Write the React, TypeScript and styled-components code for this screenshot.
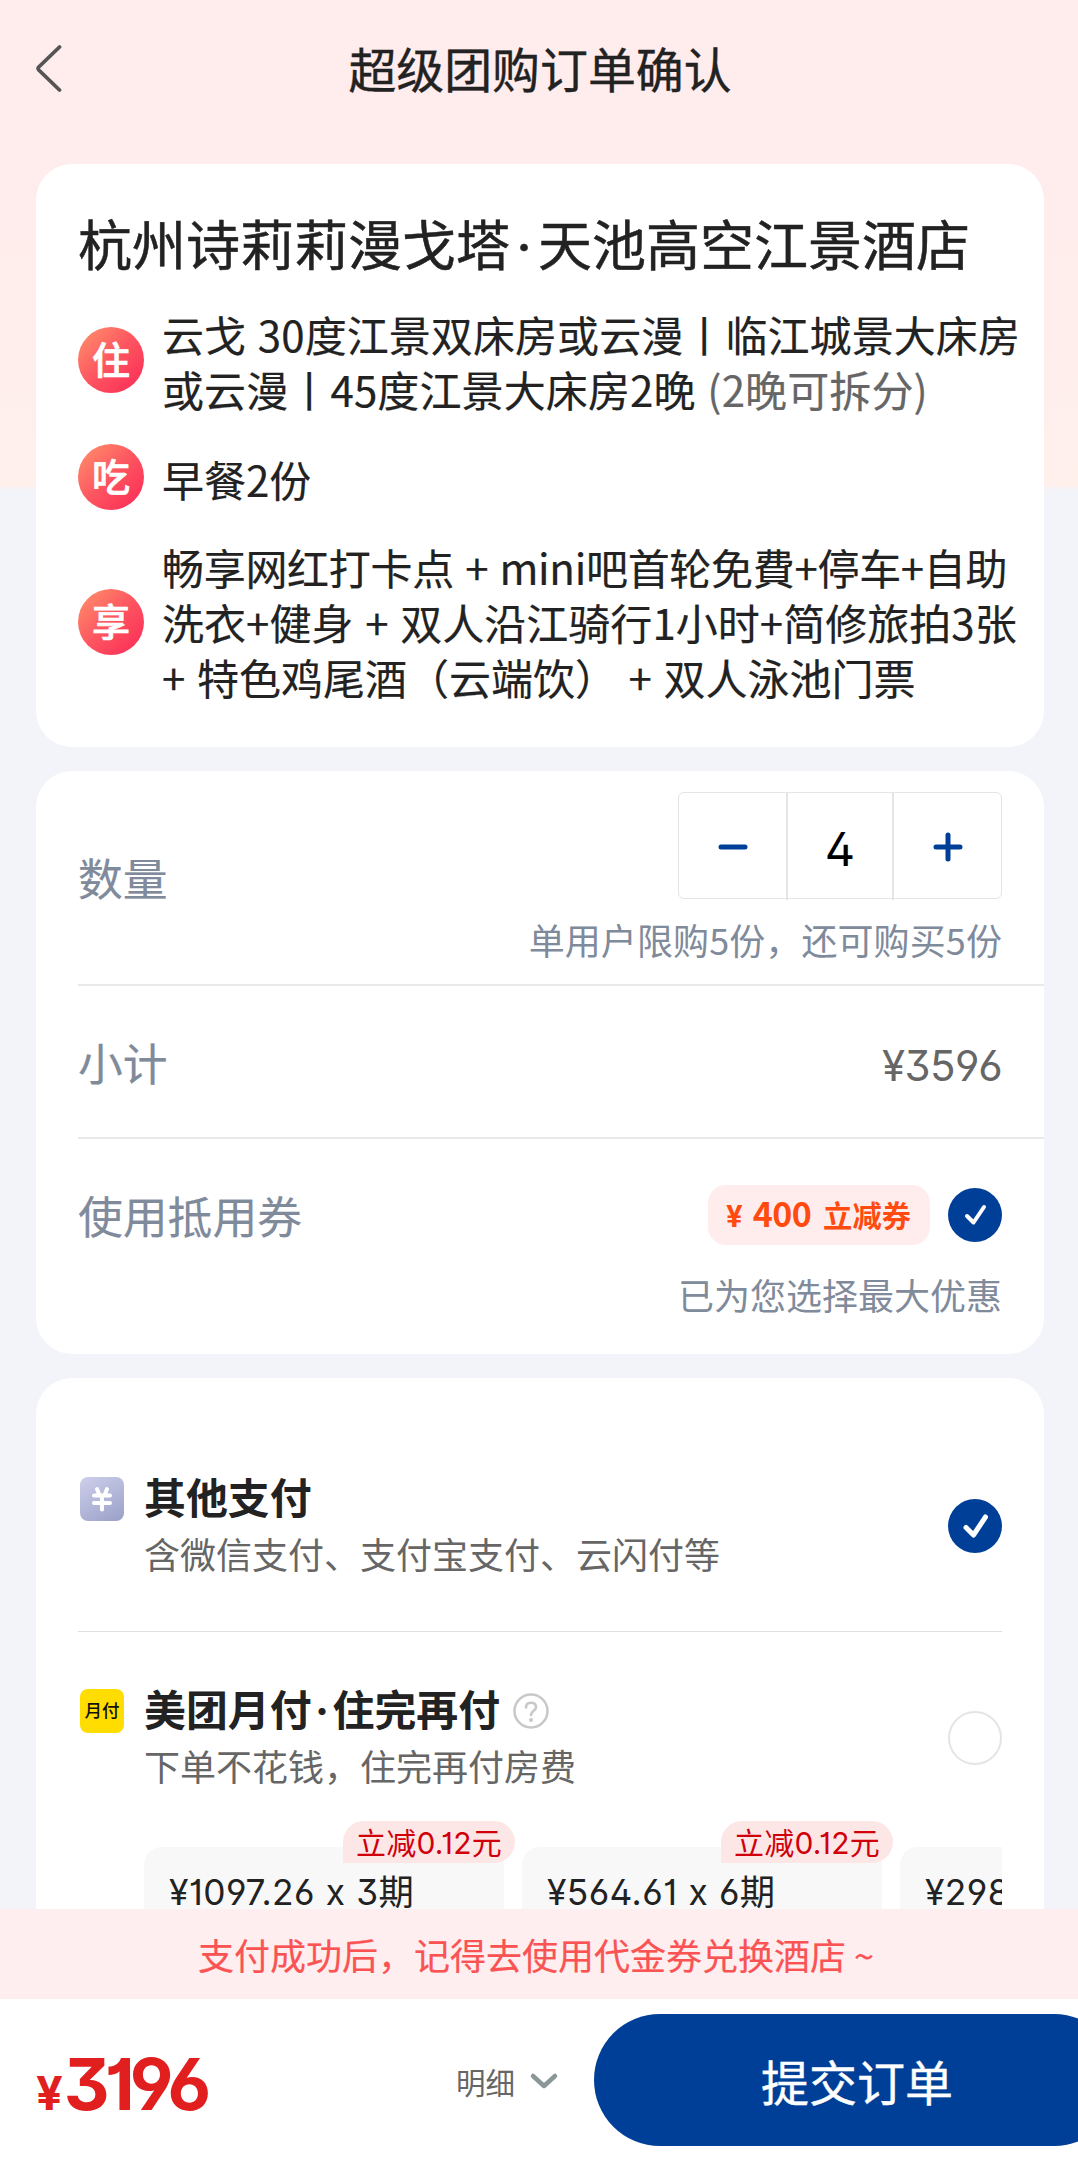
import React from "react";
import styled, { createGlobalStyle } from "styled-components";

const cjk = `"Noto Sans CJK SC", sans-serif`;

const GlobalStyle = createGlobalStyle`
  * { box-sizing: border-box; }
  body {
    margin: 0;
    background: #f3f4f9;
    font-family: Inter, ${cjk};
    font-feature-settings: "ss01" 1, "cv01" 1;
    color: #222;
  }
`;

const Page = styled.div`
  width: 1078px;
  height: 2162px;
  display: flex;
  flex-direction: column;
  overflow: hidden;
  background: #f3f4f9;
`;

const Content = styled.main`
  height: 1909px;
  flex: none;
  overflow: hidden;
  padding: 0 34px 0 36px;
  background: linear-gradient(180deg, #ffeded 0, #ffecec 160px, #fff0ec 485px, #f3f4f9 490px) no-repeat;
`;

const Header = styled.header`
  height: 164px;
  padding-top: 40px;
  display: grid;
  grid-template-columns: 60px 1fr 60px;
  align-items: start;
`;

const BackButton = styled.button`
  height: 56px;
  padding: 0;
  border: 0;
  background: none;
  display: flex;
  align-items: center;
`;

const PageTitle = styled.h1`
  margin: 0;
  text-align: center;
  font-size: 47.9px;
  font-weight: 400;
  line-height: 62px;
  -webkit-text-stroke: 0.4px currentColor;
`;

const Card = styled.section<{ $gap?: number }>`
  margin-top: ${(p) => p.$gap ?? 0}px;
  border-radius: 36px;
  background: #fff;
`;

const HotelCard = styled(Card)`
  height: 583px;
  padding: 43px 0 0 42px;
`;

const HotelName = styled.h2`
  margin: 0 0 17px;
  font-size: 54px;
  font-weight: 400;
  line-height: 80px;
  white-space: nowrap;
  -webkit-text-stroke: 0.5px currentColor;
`;

const Dot = styled.span<{ $w: number }>`
  display: inline-block;
  width: ${(p) => p.$w}px;
  text-align: center;
`;

const Detail = styled.div<{ $gap?: number }>`
  display: flex;
  align-items: center;
  gap: 18px;
  margin-top: ${(p) => p.$gap ?? 0}px;
`;

const Badge = styled.span`
  width: 66px;
  height: 66px;
  flex: none;
  display: flex;
  align-items: center;
  justify-content: center;
  border-radius: 50%;
  background: linear-gradient(135deg, #ff8a6a 8%, #fd5560 50%, #fc2f58 92%);
  color: #fff;
  font-size: 38px;
  font-weight: 500;
  line-height: 1;
  -webkit-text-stroke: 0.7px currentColor;
`;

const DetailText = styled.div<{ $shift?: number }>`
  display: flex;
  flex-direction: column;
  padding-top: ${(p) => p.$shift ?? 2}px;
`;

const Line = styled.span<{ $ls?: number }>`
  font-family: ${cjk};
  font-size: 42px;
  line-height: 55px;
  white-space: pre;
  word-spacing: 2.2px;
  letter-spacing: ${(p) => p.$ls ?? 0}px;
  -webkit-text-stroke: 0.2px currentColor;
`;

const Muted = styled.span`
  color: #666;
`;

const OrderCard = styled(Card)`
  height: 583px;
  padding-left: 42px;
`;

const OrderRow = styled.div<{ $h: number; $line?: boolean }>`
  height: ${(p) => p.$h}px;
  padding-right: 42px;
  display: flex;
  justify-content: space-between;
  border-bottom: ${(p) => (p.$line ? "2px solid #e9e9e9" : "0")};
`;

const Label = styled.span<{ $top: number }>`
  margin-top: ${(p) => p.$top}px;
  font-size: 44.8px;
  line-height: 60px;
  color: #7f8a9b;
  -webkit-text-stroke: 0.2px currentColor;
`;

const Side = styled.div<{ $top: number }>`
  padding-top: ${(p) => p.$top}px;
  display: flex;
  flex-direction: column;
  align-items: flex-end;
`;

const Stepper = styled.div`
  width: 324px;
  height: 107px;
  display: grid;
  grid-template-columns: 107px 108px 1fr;
  border: 1.5px solid #e5e5e5;
  border-radius: 6px;
`;

const StepButton = styled.button`
  padding: 0;
  border: 0;
  background: none;
  display: flex;
  align-items: center;
  justify-content: center;
`;

const StepValue = styled.span`
  padding-top: 5px;
  border: solid #e5e5e5;
  border-width: 0 2px;
  text-align: center;
  font-size: 47px;
  line-height: 102px;
  color: #000;
`;

const Hint = styled.span<{ $top: number; $ls?: number }>`
  margin-top: ${(p) => p.$top}px;
  font-family: ${cjk};
  font-size: 36px;
  line-height: 40px;
  letter-spacing: ${(p) => p.$ls ?? 0}px;
  color: #7f8a9b;
`;

const Subtotal = styled.span`
  margin-top: 50px;
  font-size: 42px;
  line-height: 60px;
  letter-spacing: -0.6px;
  color: #666;
`;

const CouponLine = styled.div`
  display: flex;
  align-items: center;
  gap: 18px;
`;

const Coupon = styled.span`
  width: 222px;
  height: 60px;
  padding: 2px 0 0 18px;
  display: flex;
  align-items: baseline;
  border-radius: 18px;
  background: #ffeded;
  color: #ff4a10;
  font-size: 29.3px;
  font-weight: 700;
  line-height: 60px;
  white-space: pre;
`;

const CouponAmount = styled.span`
  margin: 0 12px 0 10px;
  font-family: ${cjk};
  font-size: 34px;
  line-height: 1;
  letter-spacing: -0.6px;
`;

const PayCard = styled(Card)`
  height: 800px;
  padding: 0 42px;
`;

const PayRow = styled.div<{ $h: number; $line?: boolean; $top: number }>`
  height: ${(p) => p.$h}px;
  padding-top: ${(p) => p.$top}px;
  display: flex;
  align-items: flex-start;
  border-bottom: ${(p) => (p.$line ? "1px solid #dfdfdf" : "0")};
`;

const PayIcon = styled.span<{ $bg: string }>`
  width: 44px;
  height: 44px;
  flex: none;
  margin: 7px 20px 0 2px;
  display: flex;
  align-items: center;
  justify-content: center;
  border-radius: 8px;
  background: ${(p) => p.$bg};
  color: #111;
  font-size: 17.5px;
  font-weight: 500;
  line-height: 1;
`;

const PayBody = styled.div`
  flex: 1;
  display: flex;
  flex-direction: column;
`;

const PayName = styled.div`
  display: flex;
  align-items: center;
  font-size: 41.9px;
  font-weight: 700;
  line-height: 58px;
`;

const PayNote = styled.span`
  margin-top: 3px;
  font-size: 36px;
  line-height: 50px;
  color: #666;
`;

const HelpIcon = styled.svg`
  margin-left: 13px;
`;

const RadioSlot = styled.span`
  margin-top: 29px;
  display: flex;
`;

const RadioEmpty = styled.span`
  width: 54px;
  height: 54px;
  border: 2px solid #e4e4e4;
  border-radius: 50%;
`;

const Plans = styled.div`
  margin-left: 66px;
  padding-top: 40px;
  display: flex;
  gap: 18px;
  overflow: hidden;
`;

const Plan = styled.div`
  position: relative;
  width: 360px;
  height: 130px;
  flex: none;
  padding: 16px 0 0 25px;
  border-radius: 18px;
  background: #f8f8f8;
  font-size: 35.3px;
  line-height: 60px;
  letter-spacing: 0.4px;
  word-spacing: 0.5px;
  white-space: pre;
`;

const PlanTag = styled.span`
  position: absolute;
  top: -26px;
  right: -11px;
  width: 172px;
  height: 42px;
  border-radius: 21px 21px 21px 0;
  background: #fde6e6;
  color: #d0000a;
  font-size: 30px;
  line-height: 45px;
  letter-spacing: 0.2px;
  text-align: center;
`;

const Notice = styled.div`
  height: 90px;
  flex: none;
  background: #ffeeef;
  color: #fa5353;
  font-family: ${cjk};
  font-size: 36px;
  line-height: 91px;
  padding-left: 198px;
  white-space: pre;
  -webkit-text-stroke: 0.2px currentColor;
`;

const Footer = styled.footer`
  height: 163px;
  flex: none;
  padding: 15px 0 0 36px;
  display: flex;
  align-items: flex-start;
  background: #fff;
`;

const Total = styled.div`
  width: 420px;
  flex: none;
  display: flex;
  align-items: baseline;
  color: #e21f1f;
  font-weight: 700;
  line-height: 140px;
`;

const TotalSign = styled.span`
  font-size: 47px;
`;

const TotalValue = styled.span`
  margin-left: 1px;
  font-size: 71px;
  letter-spacing: -5px;
`;

const DetailsToggle = styled.button`
  width: 138px;
  height: 134px;
  flex: none;
  padding: 0;
  border: 0;
  background: none;
  display: flex;
  align-items: center;
  gap: 14px;
  font: inherit;
  font-size: 29.5px;
  color: #666;
`;

const Submit = styled.button`
  width: 526px;
  height: 132px;
  flex: none;
  padding: 0;
  border: 0;
  border-radius: 66px;
  background: #003f98;
  color: #fff;
  font: inherit;
  font-size: 48px;
  -webkit-text-stroke: 0.4px currentColor;
`;

const CheckedCircle = ({ thick = 4 }: { thick?: number }) => (
  <svg width="54" height="54" viewBox="0 0 54 54" fill="none">
    <circle cx="27" cy="27" r="27" fill="#003f98" />
    <path
      d={thick > 4 ? "M18 28.5L25.5 36L37.5 18" : "M19 28L25.5 34.5L36 19"}
      stroke="#fff"
      strokeWidth={thick}
      strokeLinecap="round"
      strokeLinejoin="round"
    />
  </svg>
);

const plans = [
  { text: "¥1097.26 x 3期", tag: "立减0.12元" },
  { text: "¥564.61 x 6期", tag: "立减0.12元" },
  { text: "¥298.29 x 12期" },
];

export default function App() {
  return (
    <Page>
      <GlobalStyle />
      <Content>
        <Header>
          <BackButton aria-label="返回">
            <svg width="28" height="50" viewBox="0 0 28 50" fill="none">
              <path
                d="M23.500 4L2.800 24Q1.500 25.500 2.800 27L23.500 47"
                stroke="#555"
                strokeWidth="3.800"
                strokeLinecap="round"
              />
            </svg>
          </BackButton>
          <PageTitle>超级团购订单确认</PageTitle>
        </Header>

        <HotelCard>
          <HotelName>
            杭州诗莉莉漫戈塔<Dot $w={28}>·</Dot>天池高空江景酒店
          </HotelName>
          <Detail>
            <Badge>住</Badge>
            <DetailText>
              <Line $ls={0.08}>云戈 30度江景双床房或云漫丨临江城景大床房</Line>
              <Line $ls={0.12}>
                或云漫丨45度江景大床房2晚 <Muted>(2晚可拆分)</Muted>
              </Line>
            </DetailText>
          </Detail>
          <Detail $gap={28}>
            <Badge>吃</Badge>
            <DetailText>
              <Line>早餐2份</Line>
            </DetailText>
          </Detail>
          <Detail $gap={29}>
            <Badge>享</Badge>
            <DetailText $shift={0}>
              <Line $ls={-0.3}>畅享网红打卡点 + mini吧首轮免費+停车+自助</Line>
              <Line $ls={0.04}>洗衣+健身 + 双人沿江骑行1小时+简修旅拍3张</Line>
              <Line>+ 特色鸡尾酒（云端饮） + 双人泳池门票</Line>
            </DetailText>
          </Detail>
        </HotelCard>

        <OrderCard $gap={24}>
          <OrderRow $h={215} $line>
            <Label $top={79}>数量</Label>
            <Side $top={21}>
              <Stepper>
                <StepButton aria-label="减少">
                  <svg width="30" height="30" viewBox="0 0 30 30">
                    <path d="M3 15H27" stroke="#003f98" strokeWidth="5" strokeLinecap="round" />
                  </svg>
                </StepButton>
                <StepValue>4</StepValue>
                <StepButton aria-label="增加">
                  <svg width="30" height="30" viewBox="0 0 30 30">
                    <path d="M3 15H27M15 3V27" stroke="#003f98" strokeWidth="5" strokeLinecap="round" />
                  </svg>
                </StepButton>
              </Stepper>
              <Hint $top={20} $ls={0.1}>单用户限购5份，还可购买5份</Hint>
            </Side>
          </OrderRow>
          <OrderRow $h={153} $line>
            <Label $top={49}>小计</Label>
            <Subtotal>¥3596</Subtotal>
          </OrderRow>
          <OrderRow $h={215}>
            <Label $top={49}>使用抵用券</Label>
            <Side $top={46}>
              <CouponLine>
                <Coupon>
                  ¥<CouponAmount>400</CouponAmount>立减券
                </Coupon>
                <CheckedCircle />
              </CouponLine>
              <Hint $top={29}>已为您选择最大优惠</Hint>
            </Side>
          </OrderRow>
        </OrderCard>

        <PayCard $gap={24}>
          <PayRow $h={254} $top={92} $line>
            <PayIcon $bg="linear-gradient(150deg, #cdd0ea, #9a9fc8)">
              <svg width="24" height="26" viewBox="0 0 24 26" fill="none">
                <path
                  d="M7 3L9 8M17 3L15 8M4 9.500H20M4 17H20M12 9.500V23.500"
                  stroke="#fff"
                  strokeWidth="4"
                  strokeLinecap="round"
                />
              </svg>
            </PayIcon>
            <PayBody>
              <PayName>其他支付</PayName>
              <PayNote>含微信支付、支付宝支付、云闪付等</PayNote>
            </PayBody>
            <RadioSlot>
              <CheckedCircle thick={5} />
            </RadioSlot>
          </PayRow>
          <PayRow $h={175} $top={50}>
            <PayIcon $bg="#ffdd00">月付</PayIcon>
            <PayBody>
              <PayName>
                美团月付<Dot $w={21}>·</Dot>住完再付
                <HelpIcon width="36" height="36" viewBox="0 0 36 36" fill="none">
                  <circle cx="18" cy="18" r="16.500" stroke="#c8c8c8" strokeWidth="2.500" />
                  <path
                    d="M13 14.500C13 11.500 15 9.800 18 9.800C21 9.800 23 11.500 23 14.200C23 17.800 18 17.800 18 22"
                    stroke="#c8c8c8"
                    strokeWidth="2.600"
                    strokeLinecap="round"
                  />
                  <circle cx="18" cy="27" r="2" fill="#c8c8c8" />
                </HelpIcon>
              </PayName>
              <PayNote>下单不花钱，住完再付房费</PayNote>
            </PayBody>
            <RadioSlot>
              <RadioEmpty />
            </RadioSlot>
          </PayRow>
          <Plans>
            {plans.map((plan) => (
              <Plan key={plan.text}>
                {plan.text}
                {plan.tag && <PlanTag>{plan.tag}</PlanTag>}
              </Plan>
            ))}
          </Plans>
        </PayCard>
      </Content>

      <Notice>支付成功后，记得去使用代金券兑换酒店 ~</Notice>
      <Footer>
        <Total>
          <TotalSign>¥</TotalSign>
          <TotalValue>3196</TotalValue>
        </Total>
        <DetailsToggle>
          明细
          <svg width="30" height="18" viewBox="0 0 30 18" fill="none">
            <path
              d="M4 4L15 14L26 4"
              stroke="#8b9696"
              strokeWidth="4.500"
              strokeLinecap="round"
              strokeLinejoin="round"
            />
          </svg>
        </DetailsToggle>
        <Submit>提交订单</Submit>
      </Footer>
    </Page>
  );
}
